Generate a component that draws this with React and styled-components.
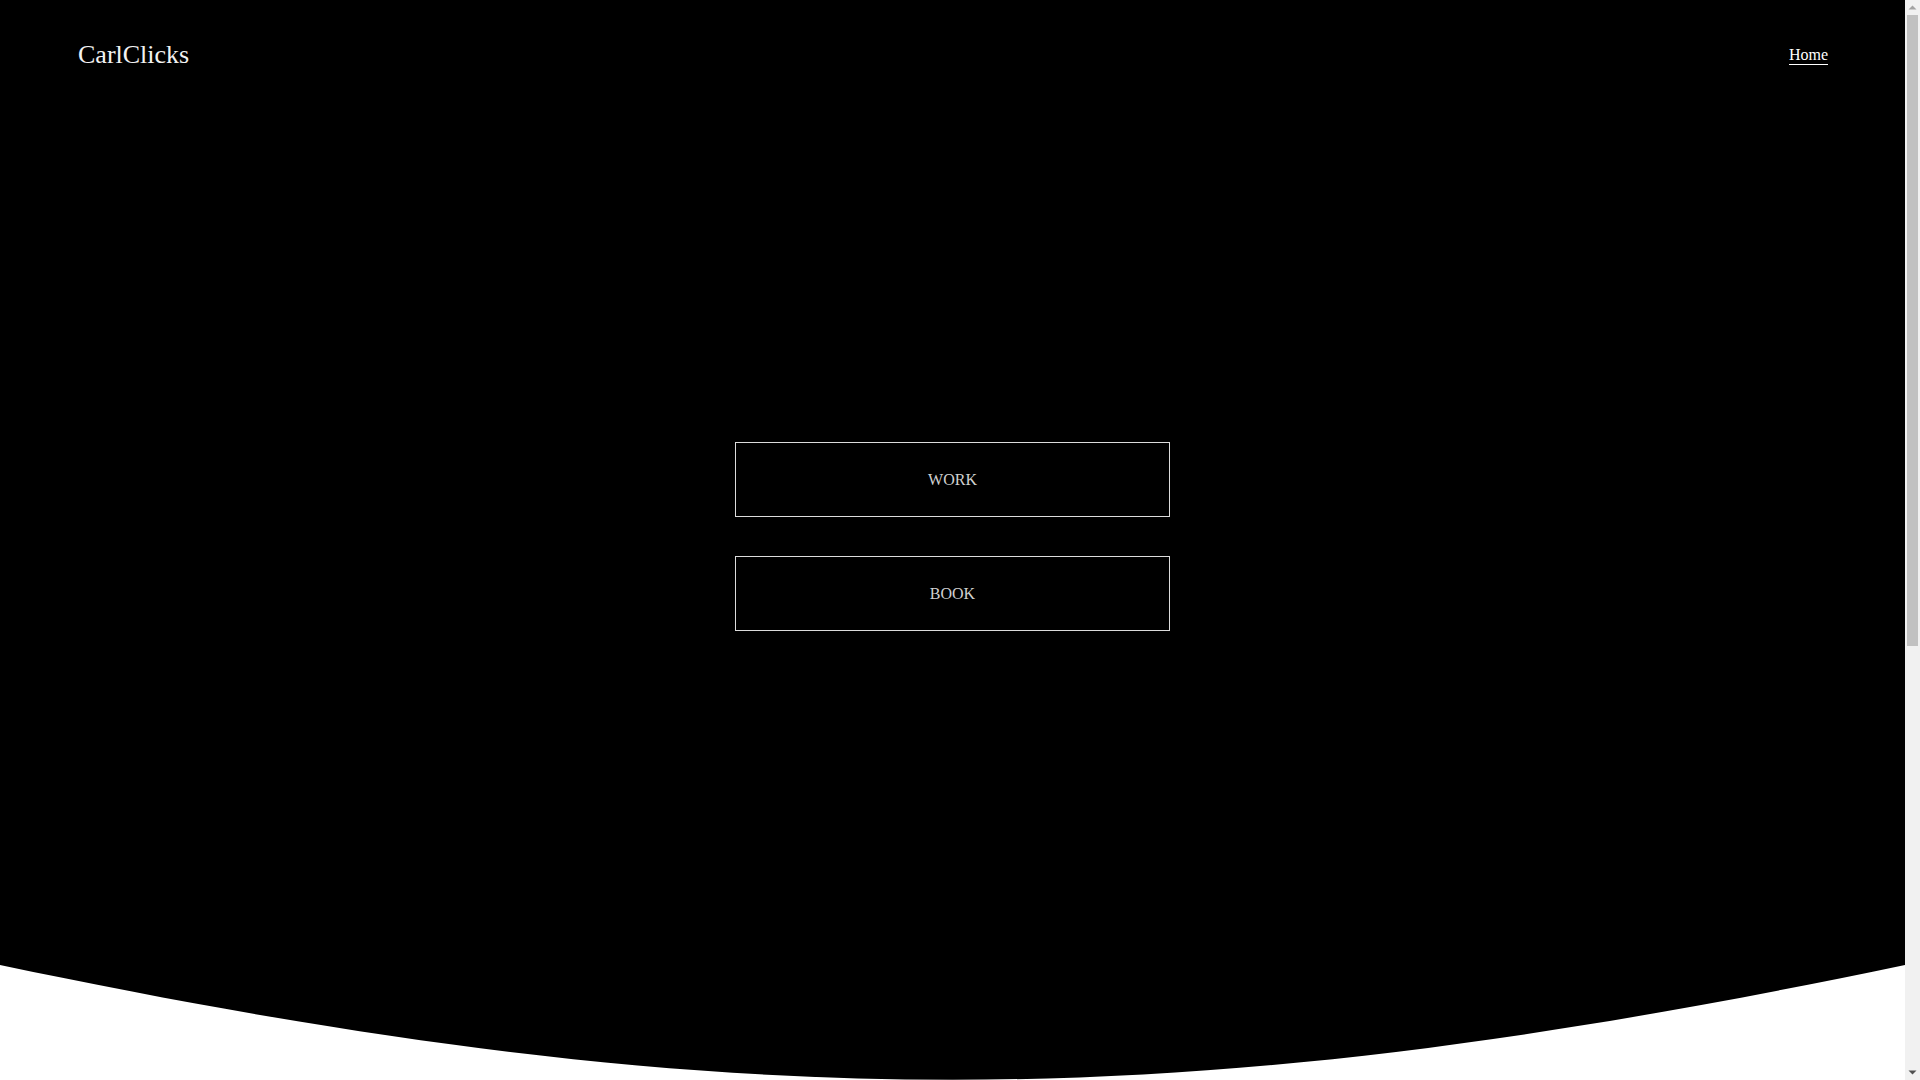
import React from "react";
import styled, { createGlobalStyle } from "styled-components";

const GlobalStyle = createGlobalStyle`
	* {
		box-sizing: border-box;
	}
	html, body {
		margin: 0;
		padding: 0;
		background-color: #ffffff;
		font-family: "Liberation Serif", "Times New Roman", serif;
	}
	body {
		padding-right: 15px;
	}
`;

export default function App() {
	return (
		<>
			<GlobalStyle />
			<Hero>
				<Dark>
					<Header>
						<Logo href="#">CarlClicks</Logo>
						<Nav>
							<NavLink href="#" $active>
								Home
							</NavLink>
						</Nav>
					</Header>
					<Main>
						<Links>
							<OutlineButton href="#">WORK</OutlineButton>
							<OutlineButton href="#">BOOK</OutlineButton>
						</Links>
					</Main>
				</Dark>
				<Wave viewBox="0 0 1905 115" preserveAspectRatio="none" aria-hidden="true">
					<path d="M0,0 C730,153 1175,153 1905,0 Z" fill="#000000" />
				</Wave>
			</Hero>
			<Below />
			<ScrollRail aria-hidden="true">
				<Arrow viewBox="0 0 15 15" $color="#a3a3a3">
					<path d="M3.5 9.5 L7.5 5.5 L11.5 9.5 Z" />
				</Arrow>
				<Track>
					<Thumb />
				</Track>
				<Arrow viewBox="0 0 15 15" $color="#505050">
					<path d="M3.5 5.5 L7.5 9.5 L11.5 5.5 Z" />
				</Arrow>
			</ScrollRail>
		</>
	);
}

const Hero = styled.section`
	height: 100vh;
	display: flex;
	flex-direction: column;
`;

const Dark = styled.div`
	flex: 1;
	background-color: #000000;
	display: flex;
	flex-direction: column;
`;

const Header = styled.header`
	height: 110px;
	padding: 0 77px 0 78px;
	display: flex;
	align-items: center;
	justify-content: space-between;
`;

const Logo = styled.a`
	color: #f2f2f2;
	font-size: 26px;
	text-decoration: none;
`;

const Nav = styled.nav`
	display: flex;
	gap: 24px;
`;

const NavLink = styled.a`
	color: #ffffff;
	font-size: 16px;
	text-decoration: none;
	border-bottom: 1px solid ${(p) => (p.$active ? "#ffffff" : "transparent")};
`;

const Main = styled.main`
	flex: 1;
	display: flex;
	align-items: center;
	justify-content: center;
	padding-bottom: 2px;
`;

const Links = styled.div`
	display: flex;
	flex-direction: column;
	gap: 39px;
`;

const OutlineButton = styled.a`
	width: 435px;
	height: 75px;
	display: flex;
	align-items: center;
	justify-content: center;
	border: 1px solid #dcdcdc;
	color: #d0d0d0;
	font-size: 16px;
	text-decoration: none;
`;

const Wave = styled.svg`
	display: block;
	width: 100%;
	height: 115px;
	flex-shrink: 0;
`;

const Below = styled.section`
	height: 720px;
	background-color: #ffffff;
`;

/* imitation of the browser scrollbar seen in the screenshot */
const ScrollRail = styled.div`
	position: fixed;
	top: 0;
	right: 0;
	width: 15px;
	height: 100vh;
	background-color: #f1f1f1;
	display: flex;
	flex-direction: column;
`;

const Arrow = styled.svg`
	display: block;
	width: 15px;
	height: 15px;
	flex-shrink: 0;
	fill: ${(p) => p.$color};
`;

const Track = styled.div`
	flex: 1;
	padding: 0 2px;
`;

const Thumb = styled.div`
	height: 631px;
	background-color: #c1c1c1;
`;
